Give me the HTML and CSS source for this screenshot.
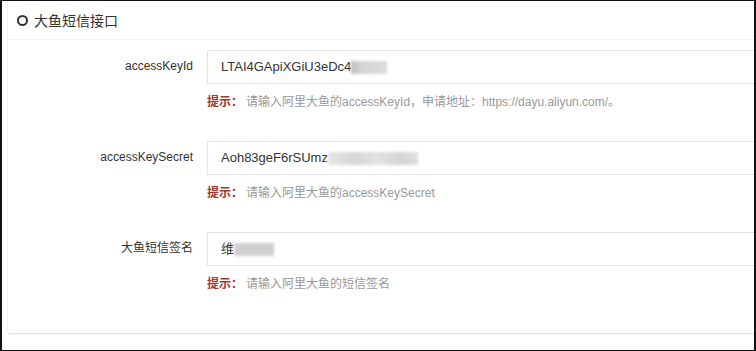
FILE: index.html
```html
<!DOCTYPE html>
<html lang="zh-CN">
<head>
    <meta charset="UTF-8">
    <meta name="viewport" content="width=device-width, initial-scale=1.0">
    <title>大鱼短信接口</title>
    <link rel="stylesheet" href="styles.css">
</head>
<body>

    <div class="frame">
        <div class="panel">
            <div class="panel-heading">
                <span class="icon-circle"></span>
                <span class="panel-title">大鱼短信接口</span>
            </div>

            <form class="panel-body">

                <div class="form-group">
                    <label for="accessKeyId">accessKeyId</label>
                    <div class="field">
                        <div class="input" id="accessKeyId">LTAI4GApiXGiU3eDc4<span class="blur blur-1"></span></div>
                        <p class="help-block"><b>提示：</b>请输入阿里大鱼的accessKeyId，申请地址：https://dayu.aliyun.com/。</p>
                    </div>
                </div>

                <div class="form-group">
                    <label for="accessKeySecret">accessKeySecret</label>
                    <div class="field">
                        <div class="input" id="accessKeySecret">Aoh83geF6rSUmz<span class="blur blur-2"></span></div>
                        <p class="help-block"><b>提示：</b>请输入阿里大鱼的accessKeySecret</p>
                    </div>
                </div>

                <div class="form-group">
                    <label for="signName">大鱼短信签名</label>
                    <div class="field">
                        <div class="input" id="signName">维<span class="blur blur-3"></span></div>
                        <p class="help-block"><b>提示：</b>请输入阿里大鱼的短信签名</p>
                    </div>
                </div>

            </form>
        </div>
    </div>

</body>
</html>
```

FILE: styles.css
```css
/* base */
body {
    margin: 0;
    padding: 0;
    font-family: "Liberation Sans", Arial, "Noto Sans CJK SC", sans-serif;
    font-size: 12px;
    color: #333;
    background-color: #fff;
}

.frame {
    box-sizing: border-box;
    height: 351px;
    border-style: solid;
    border-color: #111;
    border-width: 1px 2px 1px 2px;
    padding-left: 5px;
    overflow: hidden;
}

/* panel */
.panel {
    margin-right: -20px;
    border: 1px solid #f0f0f0;
    border-top: none;
    border-bottom-color: #e2e2e2;
    border-radius: 0 0 3px 3px;
    box-shadow: 0 1px 1px rgba(0, 0, 0, 0.03);
}

.panel-heading {
    display: flex;
    align-items: center;
    height: 38px;
    padding-left: 9px;
    border-bottom: 1px solid #f0f0f0;
}

.icon-circle {
    box-sizing: border-box;
    width: 11px;
    height: 11px;
    border: 2px solid #333;
    border-radius: 50%;
    margin-right: 6px;
    margin-top: 1px;
}

.panel-title {
    font-size: 14px;
    color: #333;
}

.panel-body {
    margin: 0;
    padding: 10px 0;
}

/* form rows */
.form-group {
    display: grid;
    grid-template-columns: 185px 1fr;
    column-gap: 14px;
    margin-bottom: 28px;
}

.form-group label {
    text-align: right;
    padding-top: 6px;
    line-height: 20px;
    color: #333;
}

.input {
    box-sizing: border-box;
    height: 34px;
    line-height: 32px;
    padding-left: 13px;
    border: 1px solid #e3e3e3;
    font-size: 13px;
    color: #333;
    white-space: nowrap;
}

.blur {
    display: inline-block;
    height: 13px;
    vertical-align: middle;
    background-color: #d9d9d9;
    filter: blur(1.5px);
}

.blur-1 {
    width: 36px;
    background: linear-gradient(90deg, #bbb, #d4d4d4 30%, #dcdcdc);
}

.blur-2 {
    width: 90px;
    background: linear-gradient(90deg, #e6e6e6, #d6d6d6 30%, #e2e2e2 55%, #d4d4d4 80%, #dedede);
}

.blur-3 {
    width: 40px;
    background-color: #cfcfcf;
}

.help-block {
    margin: 7px 0 0;
    line-height: 22px;
    color: #999;
}

.help-block b {
    color: #a0392f;
    margin-right: 3px;
}
```
